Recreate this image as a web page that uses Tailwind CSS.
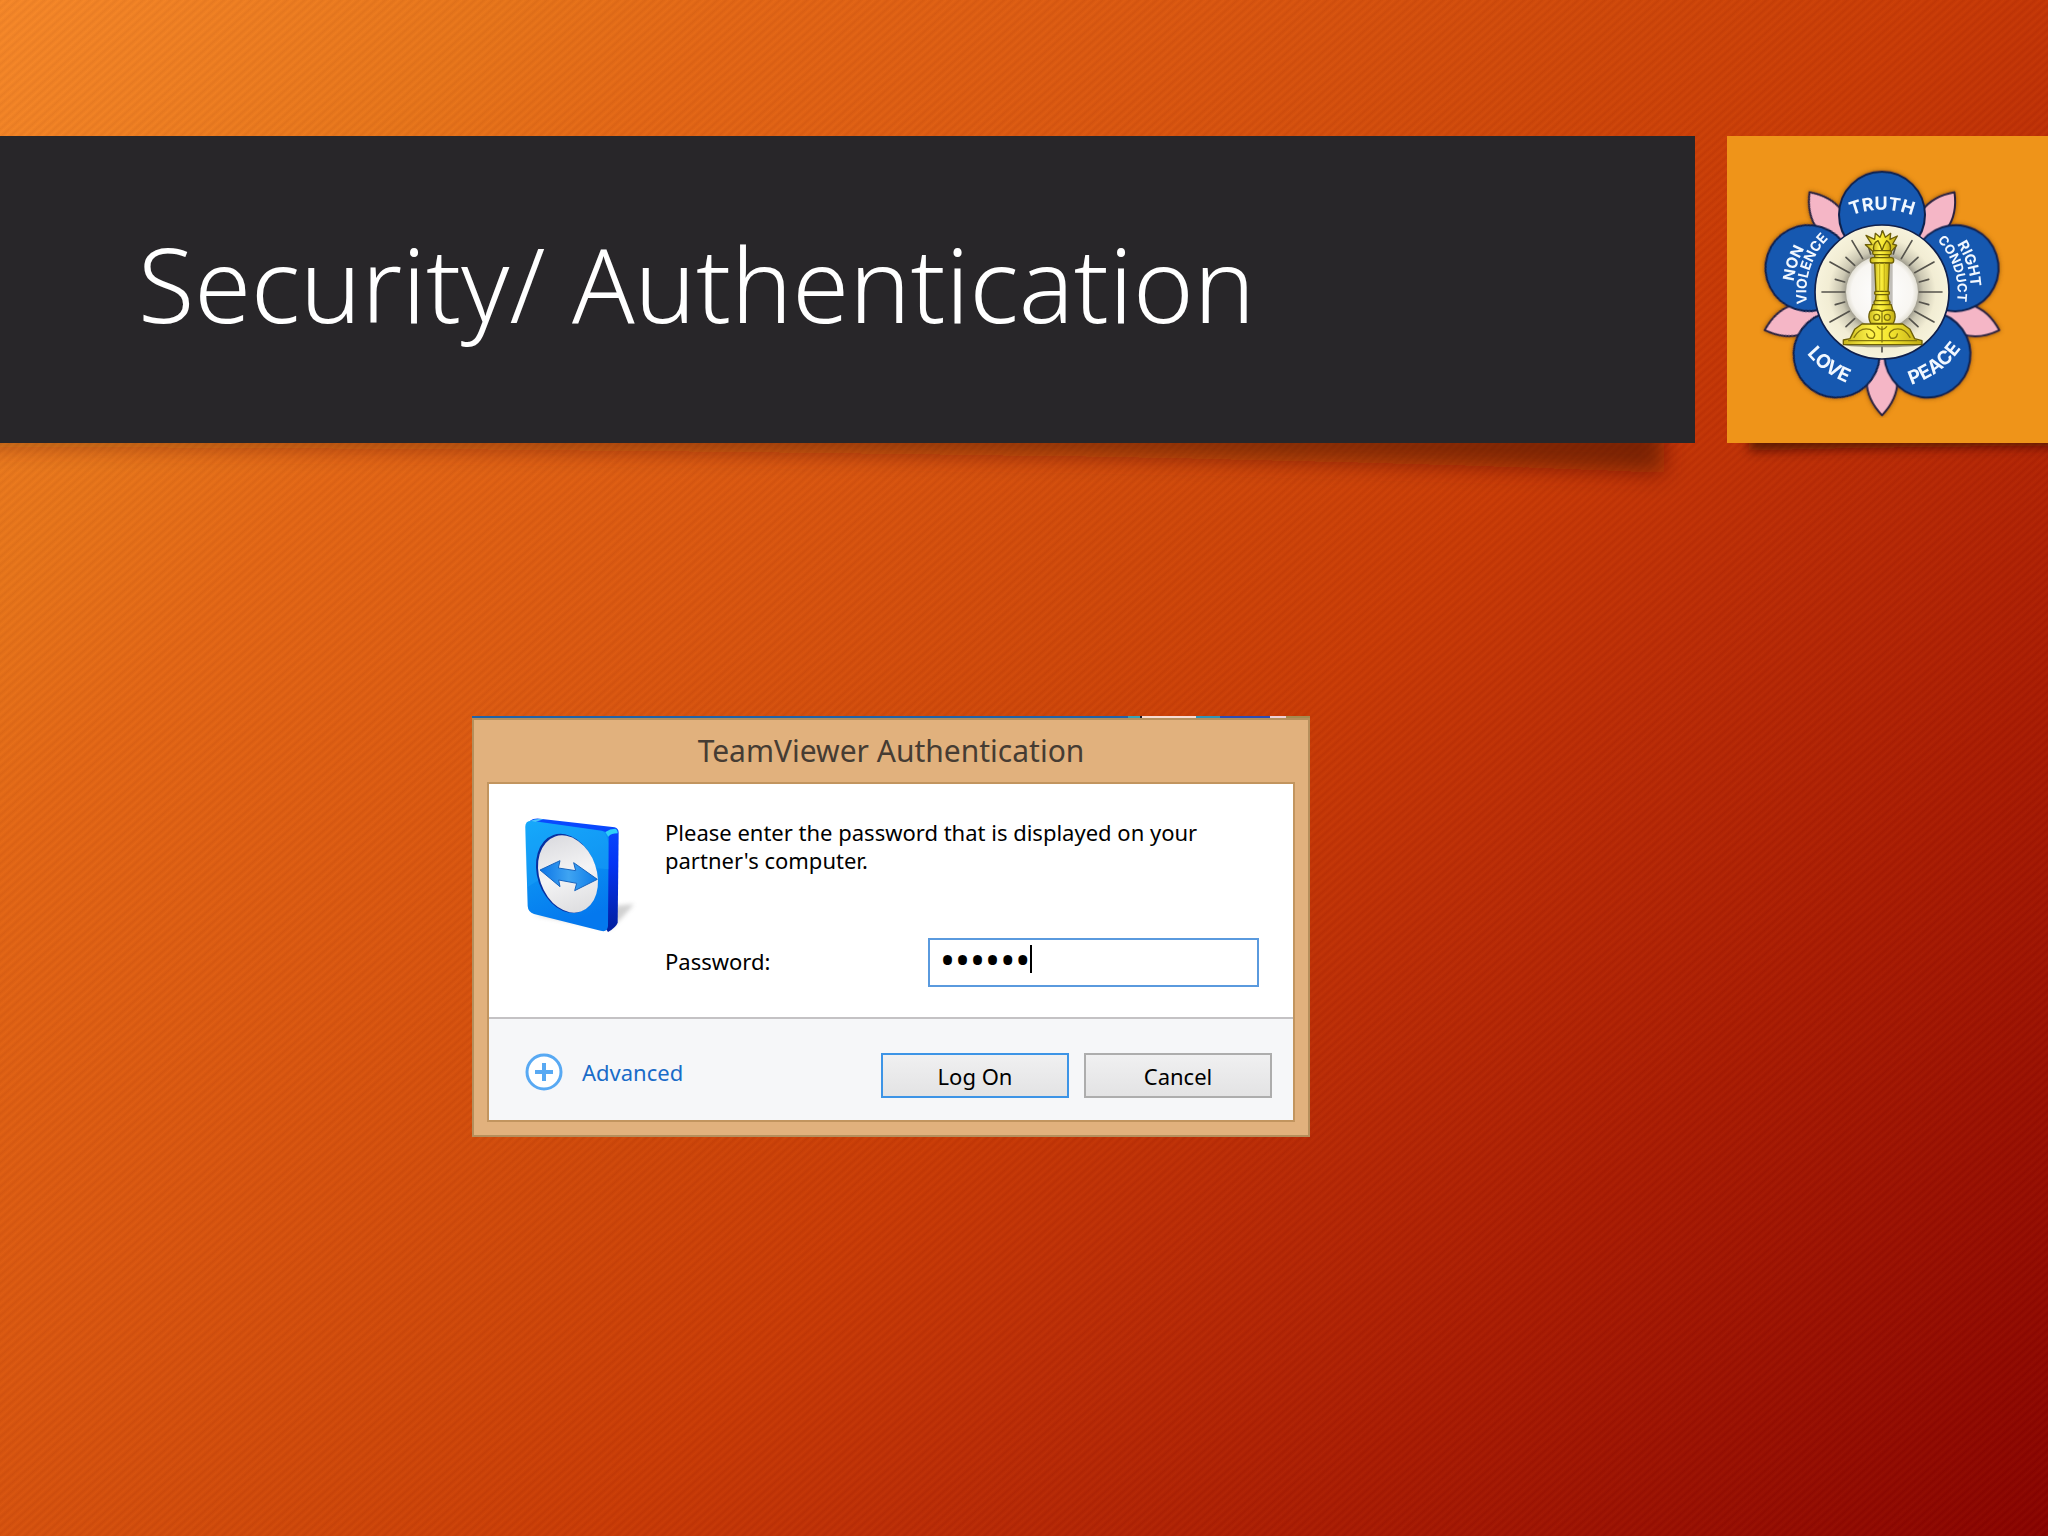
<!DOCTYPE html>
<html lang="en">
<head>
<meta charset="utf-8">
<meta name="viewport" content="width=device-width, initial-scale=1">
<title>Security/ Authentication</title>
<script src="https://cdn.jsdelivr.net/npm/@tailwindcss/browser@4"></script>
</head>
<body class="min-h-screen overflow-x-hidden bg-[repeating-linear-gradient(138deg,rgba(90,20,0,0.07)_0px,rgba(255,150,50,0.05)_3px,rgba(90,20,0,0.07)_6px),linear-gradient(131deg,#f7892a_0%,#e8761b_15%,#e46716_22%,#da5610_36%,#cf470a_48%,#c93a06_57%,#bb2b06_66%,#a91a03_78%,#990e02_88%,#860000_100%)] font-['Noto_Sans',sans-serif] text-black">

<header class="flex gap-8 pt-[136px]">
  <!-- Title band with a shadow that deepens towards the right -->
  <div class="relative flex-1">
    <svg class="absolute top-full left-0 h-16 w-full" viewBox="0 0 1695 64" preserveAspectRatio="none" aria-hidden="true">
      <defs>
        <filter id="soft" x="-5%" y="-50%" width="110%" height="220%"><feGaussianBlur stdDeviation="11"/></filter>
        <linearGradient id="fade" x1="0" x2="1" y1="0" y2="0"><stop offset="0" stop-color="#4a1400" stop-opacity=".35"/><stop offset="1" stop-color="#4a1400" stop-opacity=".6"/></linearGradient>
      </defs>
      <path d="M-30 -20H1664V30Q1200 8 -30 4Z" fill="url(#fade)" filter="url(#soft)"/>
    </svg>
    <div class="relative flex h-[307px] items-center bg-[#282629] px-[138px] pb-3">
      <h1 class="text-[103px] leading-[139px] font-light whitespace-nowrap text-white">Security/ Authentication</h1>
    </div>
  </div>

  <!-- Emblem -->
  <div class="relative w-[321px]">
    <svg class="absolute top-full left-0 h-10 w-full" viewBox="0 0 321 40" preserveAspectRatio="none" aria-hidden="true">
      <defs><filter id="soft2" x="-10%" y="-80%" width="120%" height="260%"><feGaussianBlur stdDeviation="6"/></filter></defs>
      <path d="M22 -16H350V3Q150 4 22 8Z" fill="#3a0a00" fill-opacity=".75" filter="url(#soft2)"/>
    </svg>
    <div class="relative h-[307px] bg-[#ef9419] pt-[30px] pl-[29px]">
      <svg class="size-[252px]" viewBox="-378 -378 756 756" role="img" aria-label="Truth, Right Conduct, Peace, Love, Non Violence">
        <defs>
          <path id="leaf" d="M0 370Q-46 322 -46 268L-30 180H30L46 268Q46 322 0 370Z"/>
          <path id="a247" d="M-247 0A247 247 0 0 1 247 0"/>
          <path id="a267" d="M-267 0A267 267 0 0 1 267 0"/>
          <path id="a227" d="M-227 0A227 227 0 0 1 227 0"/>
          <path id="b292" d="M-292 0A292 292 0 0 0 292 0"/>
          <radialGradient id="disc"><stop offset="0" stop-color="#fff"/><stop offset=".85" stop-color="#f8f6f2"/><stop offset="1" stop-color="#e2dfd4"/></radialGradient>
          <radialGradient id="ring"><stop offset=".5" stop-color="#8f8c80"/><stop offset=".62" stop-color="#cbc7b2"/><stop offset=".8" stop-color="#f2edd4"/><stop offset="1" stop-color="#f7f3dc"/></radialGradient>
          <linearGradient id="gold" x1="0" x2="1" y1="0" y2="0"><stop offset="0" stop-color="#c9b61a"/><stop offset=".35" stop-color="#fdf24a"/><stop offset=".6" stop-color="#f4e52f"/><stop offset="1" stop-color="#bfaa14"/></linearGradient>
          <filter id="glow" x="-10%" y="-10%" width="120%" height="120%"><feDropShadow dx="0" dy="0" stdDeviation="6" flood-color="#6b3a00" flood-opacity=".7"/></filter>
        </defs>
        <g filter="url(#glow)" stroke="#2b2440" stroke-width="6" stroke-linejoin="round">
          <g fill="#f5b6c6">
            <use href="#leaf"/>
            <use href="#leaf" transform="rotate(72)"/>
            <use href="#leaf" transform="rotate(144)"/>
            <use href="#leaf" transform="rotate(216)"/>
            <use href="#leaf" transform="rotate(288)"/>
          </g>
          <g fill="#1458b0" stroke="#10204c">
            <circle cy="-232" r="129"/>
            <circle cy="-232" r="129" transform="rotate(72)"/>
            <circle cy="-232" r="129" transform="rotate(144)"/>
            <circle cy="-232" r="129" transform="rotate(216)"/>
            <circle cy="-232" r="129" transform="rotate(288)"/>
          </g>
        </g>
        <circle r="201" fill="url(#ring)" stroke="#10204c" stroke-width="5"/>
        <g stroke="#55534c" stroke-width="5" stroke-linecap="round">
          <path d="M-180 0H-112M112 0H180"/>
          <path d="M-140 -38L-112 -30M140 -38L112 -30M-140 38L-112 30M140 38L112 30"/>
          <path d="M-156 -90L-98 -58M156 -90L98 -58M-156 90L-98 58M156 90L98 58"/>
          <path d="M-108 -104L-82 -80M108 -104L82 -80M-108 104L-82 80M108 104L82 80"/>
          <path d="M-90 -154L-58 -100M90 -154L58 -100"/>
          <path d="M-42 -140L-34 -114M42 -140L34 -114M0 -182V-120M0 165V180"/>
        </g>
        <circle r="108" fill="url(#disc)"/>
        <!-- Pillar -->
        <ellipse cx="0" cy="158" rx="112" ry="8" fill="#7d7a6c" opacity=".7"/>
        <g fill="none" stroke="#777468" stroke-width="12" opacity=".45"><path d="M-26 -90V40M26 -90V40"/></g>
        <g fill="url(#gold)" stroke="#6d5f08" stroke-width="4" stroke-linejoin="round">
          <path d="M-28 -122L-50 -142L-30 -142L-48 -170L-22 -158L-20 -176L-6 -164L2 -184L10 -164L26 -176L24 -158L46 -168L32 -144L44 -140L28 -122Z"/>
          <path d="M-24 -122Q-30 -146 -12 -154Q-4 -140 0 -124Q6 -144 14 -154Q30 -144 24 -122Z"/>
          <rect x="-28" y="-124" width="56" height="12" rx="5"/>
          <rect x="-22" y="-112" width="44" height="10"/>
          <rect x="-35" y="-103" width="70" height="16" rx="7"/>
          <path d="M-22 -87H22L18 8H-18Z"/>
          <rect x="-22" y="-2" width="44" height="10" rx="4"/>
          <path d="M-18 8H18L20 28H-20Z"/>
          <rect x="-24" y="26" width="48" height="12" rx="5"/>
          <path d="M-28 38H28L34 60H-34Z"/>
          <path d="M-36 58Q-44 76 -34 94H34Q44 76 36 58Q20 50 0 58Q-20 50 -36 58Z"/>
          <path d="M-60 96H62L84 112L98 140L120 146V158H-116V144L-96 140L-82 112Z"/>
        </g>
        <g fill="none" stroke="#85760e" stroke-width="4" stroke-linecap="round">
          <path d="M-7 -84V-4M7 -84V-4" stroke="#c9b61a"/>
          <circle cx="-16" cy="76" r="9"/><circle cx="16" cy="76" r="9"/><path d="M0 62V90"/>
          <path d="M-84 136Q-66 104 -36 112Q-14 122 -26 138Q-44 142 -46 126M84 136Q66 104 36 112Q14 122 26 138Q44 142 46 126M0 104V150M-100 146H104M-14 104Q0 122 14 104"/>
        </g>
        <g class="font-['Inter'] font-bold" fill="#f2f8ff" text-anchor="middle">
          <text font-size="54"><textPath href="#a247" startOffset="50%">TRUTH</textPath></text>
          <g transform="rotate(72)">
            <text font-size="44"><textPath href="#a267" startOffset="50%">RIGHT</textPath></text>
            <text font-size="39"><textPath href="#a227" startOffset="50%">CONDUCT</textPath></text>
          </g>
          <g transform="rotate(-72)">
            <text font-size="46"><textPath href="#a267" startOffset="50%">NON</textPath></text>
            <text font-size="42"><textPath href="#a227" startOffset="50%">VIOLENCE</textPath></text>
          </g>
          <text font-size="57" transform="rotate(36)"><textPath href="#b292" startOffset="50%">LOVE</textPath></text>
          <text font-size="57" transform="rotate(-36)"><textPath href="#b292" startOffset="50%">PEACE</textPath></text>
        </g>
      </svg>
    </div>
  </div>
</header>

<main class="px-[472px] pt-[273px] pb-20">
  <section class="w-[838px]" aria-labelledby="dialog-title">
    <!-- Sliver of the window behind the dialog -->
    <div class="flex h-0.5" aria-hidden="true">
      <div class="flex-1 bg-[#1f62a8]"></div>
      <div class="w-3 bg-[#35a3b8]"></div>
      <div class="w-0.5 bg-[#1b1b2a]"></div>
      <div class="w-[54px] bg-[#f6dcd2]"></div>
      <div class="w-6 bg-[#2f93b8]"></div>
      <div class="w-[50px] bg-[#2a4cb4]"></div>
      <div class="w-4 bg-[#ecd2d6]"></div>
      <div class="w-6 bg-[#a48b52]"></div>
    </div>
    <div class="border-2 border-[#b58f5c] bg-[#e1b17d] px-[13px] pb-[13px]">
      <h2 id="dialog-title" class="text-center text-[30px] leading-[62px] text-[#463c33]">TeamViewer Authentication</h2>
      <form class="border-2 border-[#c2955f] bg-white text-[22px] leading-7">
        <div class="flex pt-8 pr-[34px] pb-[30px] pl-[31px]">
          <svg class="h-[120px] w-[120px] shrink-0" viewBox="30 48 360 360" role="img" aria-label="TeamViewer">
            <defs>
              <linearGradient id="face" x1="0" x2="0.3" y1="0" y2="1"><stop offset="0" stop-color="#10a4fa"/><stop offset=".55" stop-color="#0a8df2"/><stop offset="1" stop-color="#0478ee"/></linearGradient>
              <linearGradient id="side" x1="0" x2="0" y1="0" y2="1"><stop offset="0" stop-color="#0a4cff"/><stop offset=".4" stop-color="#0434f4"/><stop offset="1" stop-color="#021e9c"/></linearGradient>
              <linearGradient id="dial" x1="0" x2="0" y1="0" y2="1"><stop offset="0" stop-color="#dcdce0"/><stop offset=".5" stop-color="#f4f4f5"/><stop offset="1" stop-color="#dedee0"/></linearGradient>
              <linearGradient id="arrow" x1="0" x2="1" y1="0" y2="0"><stop offset="0" stop-color="#0a74e6"/><stop offset=".5" stop-color="#3fa4f2"/><stop offset="1" stop-color="#0d7be8"/></linearGradient>
              <filter id="haze" x="-30%" y="-30%" width="160%" height="160%"><feGaussianBlur stdDeviation="7"/></filter>
            </defs>
            <path d="M290 320L372 312Q345 346 300 388L70 344Z" fill="#8c8c8c" opacity=".4" filter="url(#haze)"/>
            <path d="M60 62Q70 54 90 56L314 82Q326 86 326 98L323 368Q318 382 294 396Z" fill="url(#side)"/>
            <path d="M46 80Q46 62 64 62L276 92Q296 96 296 116L294 378Q292 398 272 392L72 342Q54 336 53 318Z" fill="url(#face)"/>
            <path d="M286 96Q300 86 316 86Q324 90 323 100Q304 100 295 110Z" fill="#2fd0f8"/>
            <path d="M62 62Q80 54 100 58L76 66Z" fill="#4cc4fb"/>
            <path d="M46 140L52 262Q150 190 296 208L295 130Q290 98 276 93L64 63Q46 62 46 80Z" fill="#2ebcff" opacity=".22"/>
            <ellipse cx="170" cy="220" rx="88" ry="122" transform="rotate(-19 170 220)" fill="#0830a0"/>
            <ellipse cx="174" cy="222" rx="86" ry="119" transform="rotate(-19 174 222)" fill="url(#dial)"/>
            <path d="M90 210L150 182L145 204L197 212L191 188L262 238L194 272L200 250L146 240L150 260Z" fill="url(#arrow)" stroke="#1763bd" stroke-width="3" stroke-linejoin="round"/>
          </svg>
          <div class="flex-1 pt-0.5 pl-[25px]">
            <p class="w-[560px]">Please enter the password that is displayed on your<br>partner's computer.</p>
            <div class="mt-16 flex items-center justify-between">
              <label for="password" class="pb-1">Password:</label>
              <div class="relative">
                <input id="password" type="password" value="secret" class="block h-[49px] w-[331px] border-2 border-[#5a9ade] bg-white pb-1.5 pl-2.5 font-['Noto_Sans'] text-[40px] leading-10 caret-transparent outline-none">
                <span class="absolute top-[7px] left-[102px] h-7 w-0.5 bg-black" aria-hidden="true"></span>
              </div>
            </div>
          </div>
        </div>
        <div class="flex items-start justify-between border-t-2 border-[#c4c2c4] bg-[#f6f7f9] pt-[34px] pr-[21px] pb-[22px] pl-9">
          <button type="button" class="flex items-center gap-[19px] text-[#1a6cc8]">
            <svg class="size-[38px]" viewBox="0 0 38 38" fill="none" stroke="#58a9f3" aria-hidden="true">
              <circle cx="19" cy="19" r="17" stroke-width="3" fill="#fff"/>
              <path d="M10 19H28M19 10V28" stroke-width="4"/>
            </svg>
            Advanced
          </button>
          <div class="flex gap-[15px]">
            <button type="submit" class="h-[45px] w-[188px] border-2 border-[#3d94e6] bg-linear-to-b from-[#f0f0f1] to-[#e3e3e4]">Log On</button>
            <button type="button" class="h-[45px] w-[188px] border-2 border-[#adadad] bg-linear-to-b from-[#f0f0f1] to-[#e3e3e4]">Cancel</button>
          </div>
        </div>
      </form>
    </div>
  </section>
</main>
</body>
</html>
